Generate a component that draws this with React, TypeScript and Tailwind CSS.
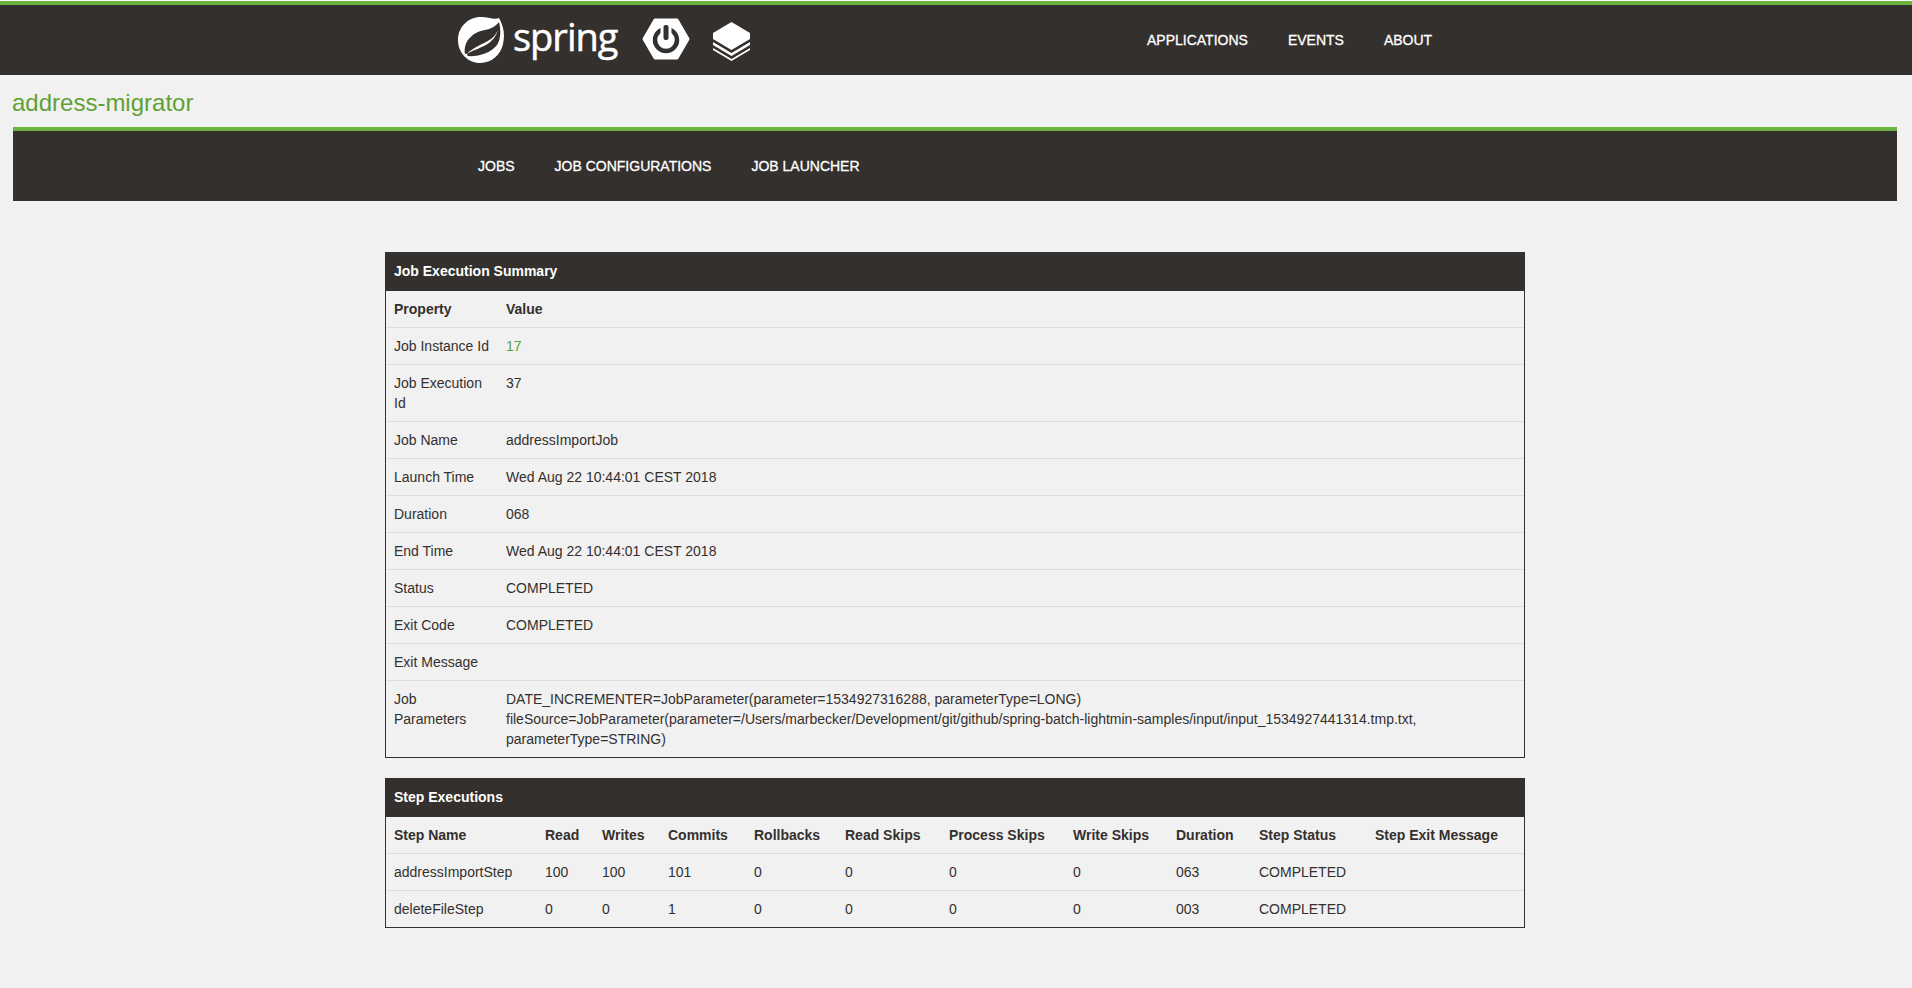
const summary: { label: string; value: React.ReactNode }[] = [
  { label: "Job Instance Id", value: <span className="text-[#5fa134]">17</span> },
  { label: "Job Execution Id", value: "37" },
  { label: "Job Name", value: "addressImportJob" },
  { label: "Launch Time", value: "Wed Aug 22 10:44:01 CEST 2018" },
  { label: "Duration", value: "068" },
  { label: "End Time", value: "Wed Aug 22 10:44:01 CEST 2018" },
  { label: "Status", value: "COMPLETED" },
  { label: "Exit Code", value: "COMPLETED" },
  { label: "Exit Message", value: "" },
  {
    label: "Job Parameters",
    value: (
      <>
        DATE_INCREMENTER=JobParameter(parameter=1534927316288, parameterType=LONG)
        <br />
        fileSource=JobParameter(parameter=/Users/marbecker/Development/git/github/spring-batch-lightmin-samples/input/input_1534927441314.tmp.txt,
        parameterType=STRING)
      </>
    ),
  },
];

const stepColumns = [
  { name: "Step Name", width: "w-[151px]" },
  { name: "Read", width: "w-[57px]" },
  { name: "Writes", width: "w-[66px]" },
  { name: "Commits", width: "w-[86px]" },
  { name: "Rollbacks", width: "w-[91px]" },
  { name: "Read Skips", width: "w-[104px]" },
  { name: "Process Skips", width: "w-[124px]" },
  { name: "Write Skips", width: "w-[103px]" },
  { name: "Duration", width: "w-[83px]" },
  { name: "Step Status", width: "w-[116px]" },
  { name: "Step Exit Message", width: "" },
];

const steps = [
  ["addressImportStep", "100", "100", "101", "0", "0", "0", "0", "063", "COMPLETED", ""],
  ["deleteFileStep", "0", "0", "1", "0", "0", "0", "0", "003", "COMPLETED", ""],
];

const SpringLeaf = () => (
  <svg width="46" height="46" viewBox="0 0 46 46" className="shrink-0">
    <path
      fill="#fff"
      d="M23 0C30 0 36 3 41 1C46 10 47 18 45 27C43 37 34 46 22 46C10 46 0 36 0 23C0 10 10 0 23 0Z"
    />
    <path
      fill="#34302d"
      d="M7 37C5 24 15 15 27 13C33 12 38 9 41 5C43 13 43 22 39 28C33 36 20 40 9 39Z"
    />
    <path fill="#fff" d="M9 37C15 30 26 27 33 22C36 20 38 17 40 13C38 19 35 23 31 26C24 31 15 33 9 37Z" />
    <circle cx="8" cy="38" r="1.6" fill="#fff" />
  </svg>
);

const BootPower = () => (
  <svg width="48" height="42" viewBox="0 0 48 42" className="shrink-0">
    <path fill="#fff" stroke="#fff" strokeWidth="3" strokeLinejoin="round" d="M13 2H35L46 21L35 40H13L2 21Z" />
    <circle cx="24" cy="22" r="11" fill="none" stroke="#34302d" strokeWidth="4.5" />
    <rect x="18.5" y="5" width="11" height="15" fill="#fff" />
    <rect x="21.5" y="7" width="5" height="15" rx="2" fill="#34302d" />
  </svg>
);

const DataStack = () => (
  <svg width="37" height="39" viewBox="0 0 37 39" className="shrink-0">
    <path fill="#fff" d="M18.5 0L37 11V17L18.5 28L0 17V11Z" />
    <path fill="#fff" d="M0 20L18.5 31L37 20V23L18.5 34L0 23Z" />
    <path fill="#fff" d="M0 26L18.5 37L37 26V28L18.5 39L0 28Z" />
  </svg>
);

const NavLink = ({ children }: { children: React.ReactNode }) => (
  <a className="text-sm text-white [-webkit-text-stroke:0.3px_#fff]">{children}</a>
);

const Panel = ({ title, children }: { title: string; children: React.ReactNode }) => (
  <section className="w-[1140px] border border-t-0 border-[#34302d]">
    <h3 className="-mx-px flex h-[39px] items-center bg-[#34302d] px-[9px] pb-0.5 text-sm font-bold text-white">
      {title}
    </h3>
    {children}
  </section>
);

export default function App() {
  return (
    <div className="min-h-[988px] bg-[#f1f1f1] font-['Liberation_Sans',Arial,sans-serif] text-sm leading-5 text-[#34302d]">
      {/* Top bar */}
      <header className="mt-px flex h-[74px] items-center border-t-4 border-[#6db33f] bg-[#34302d] pl-[458px]">
        <div className="flex w-[689px] items-center">
          <SpringLeaf />
          <span className="ml-[9px] mb-[9px] font-['Open_Sans',sans-serif] text-[38px] leading-none tracking-[-1px] text-white [-webkit-text-stroke:0.5px_#fff]">
            spring
          </span>
          <div className="ml-[25px] mb-[3px]">
            <BootPower />
          </div>
          <div className="ml-[23px] mt-[3px]">
            <DataStack />
          </div>
        </div>
        <nav className="flex gap-10">
          <NavLink>APPLICATIONS</NavLink>
          <NavLink>EVENTS</NavLink>
          <NavLink>ABOUT</NavLink>
        </nav>
      </header>

      <h2 className="mt-3 h-10 pl-3 text-2xl leading-8 text-[#5fa134]">address-migrator</h2>

      {/* Sub navigation */}
      <div className="ml-[13px] mr-[15px] flex h-[74px] items-center gap-10 border-t-4 border-[#6db33f] bg-[#34302d] pl-[465px]">
        <NavLink>JOBS</NavLink>
        <NavLink>JOB CONFIGURATIONS</NavLink>
        <NavLink>JOB LAUNCHER</NavLink>
      </div>

      <main className="mt-[51px] flex flex-col items-center gap-5 pr-0.5">
        <Panel title="Job Execution Summary">
          <table className="w-full border-collapse">
            <thead>
              <tr>
                <th className="w-[112px] px-2 py-2 text-left font-bold">Property</th>
                <th className="px-2 py-2 text-left font-bold">Value</th>
              </tr>
            </thead>
            <tbody>
              {summary.map((row) => (
                <tr key={row.label} className="border-t border-[#ddd]">
                  <td className="h-[37px] px-2 py-2 align-top">{row.label}</td>
                  <td className="px-2 py-2 align-top">{row.value}</td>
                </tr>
              ))}
            </tbody>
          </table>
        </Panel>

        <Panel title="Step Executions">
          <table className="w-full table-fixed border-collapse">
            <thead>
              <tr>
                {stepColumns.map((col) => (
                  <th key={col.name} className={`${col.width} px-2 py-2 text-left font-bold`}>
                    {col.name}
                  </th>
                ))}
              </tr>
            </thead>
            <tbody>
              {steps.map((row) => (
                <tr key={row[0]} className="border-t border-[#ddd]">
                  {row.map((cell, i) => (
                    <td key={i} className="px-2 py-2">
                      {cell}
                    </td>
                  ))}
                </tr>
              ))}
            </tbody>
          </table>
        </Panel>
      </main>
    </div>
  );
}
